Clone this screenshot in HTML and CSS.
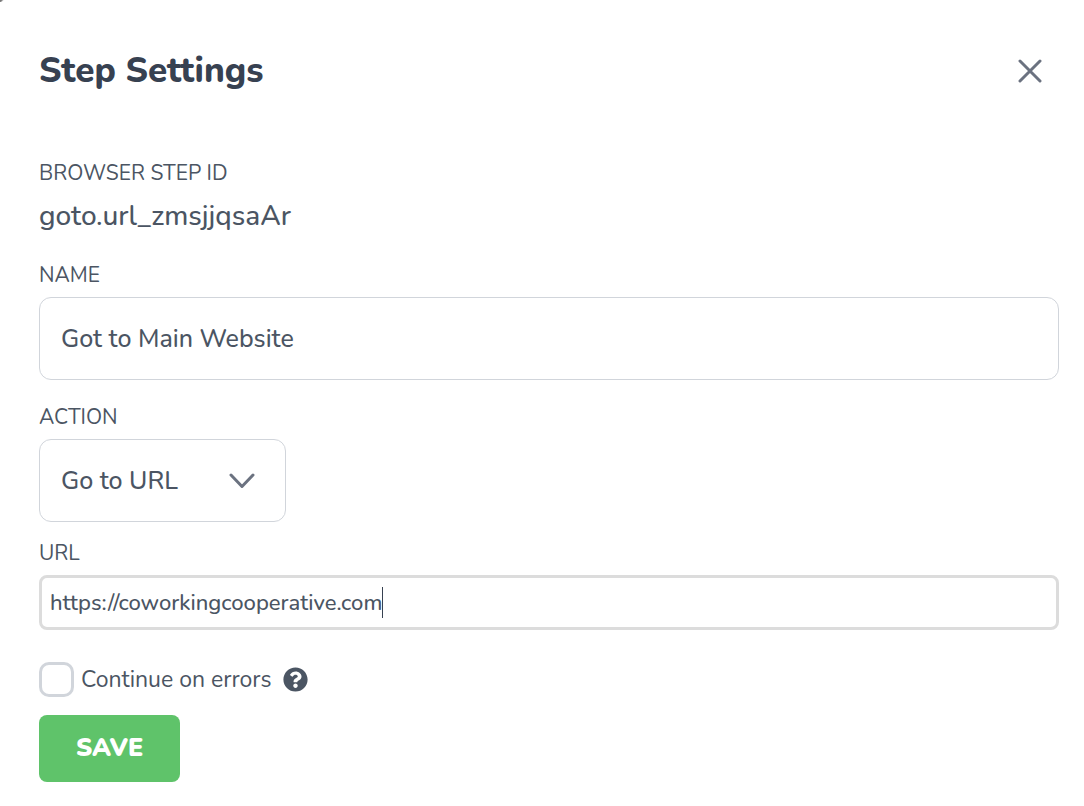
FILE: index.html
```html
<!DOCTYPE html>
<html lang="en">
<head>
    <meta charset="UTF-8">
    <meta name="viewport" content="width=device-width, initial-scale=1.0">
    <title>Step Settings</title>
    <link rel="stylesheet" href="styles.css">
</head>
<body>
    <main class="modal">
        <span class="modal__corner"></span>
        <header class="modal__header">
            <h1 class="modal__title">Step Settings</h1>
            <button class="modal__close" type="button" aria-label="Close">
                <svg width="24" height="24" viewBox="0 0 24 24" fill="none" stroke="#6b7280" stroke-width="3" stroke-linecap="round">
                    <path d="M2 2l20 20M22 2L2 22"/>
                </svg>
            </button>
        </header>

        <form class="form">
            <div class="field field--id">
                <span class="field__label">BROWSER STEP ID</span>
                <span class="field__value">goto.url_zmsjjqsaAr</span>
            </div>

            <div class="field field--name">
                <label class="field__label" for="name">NAME</label>
                <input class="input" id="name" type="text" value="Got to Main Website">
            </div>

            <div class="field field--action">
                <label class="field__label" for="action">ACTION</label>
                <div class="select">
                    <select class="select__control" id="action">
                        <option>Go to URL</option>
                    </select>
                    <svg class="select__arrow" width="26" height="16" viewBox="0 0 26 16" fill="none" stroke="#6b7280" stroke-width="3" stroke-linecap="round" stroke-linejoin="round">
                        <path d="M2 2l11 11.500L24 2"/>
                    </svg>
                </div>
            </div>

            <div class="field field--url">
                <label class="field__label" for="url">URL</label>
                <div class="url">
                    <input class="url__input" id="url" type="text" value="https://coworkingcooperative.com">
                    <span class="url__caret"></span>
                </div>
            </div>

            <div class="check">
                <input class="check__box" id="continue" type="checkbox">
                <label class="check__label" for="continue">Continue on errors</label>
                <svg class="check__help" width="25" height="25" viewBox="0 0 512 512" fill="#4b5563">
                    <path d="M504 256c0 137-111 248-248 248S8 393 8 256C8 119.100 119 8 256 8s248 111.100 248 248zM262.700 90c-54.500 0-89.300 23-116.500 63.800-3.500 5.300-2.400 12.400 2.700 16.300l34.700 26.300c5.200 3.900 12.600 3 16.700-2.100 17.900-22.700 30.100-35.800 57.300-35.800 20.400 0 45.700 13.100 45.700 33 0 15-12.400 22.700-32.500 34C247.100 238.500 216 254.900 216 296v4c0 6.600 5.400 12 12 12h56c6.600 0 12-5.400 12-12v-1.300c0-28.500 83.200-29.600 83.200-106.700 0-58-60.200-102-116.500-102zM256 338c-25.400 0-46 20.600-46 46s20.600 46 46 46 46-20.600 46-46-20.600-46-46-46z"/>
                </svg>
            </div>

            <button class="save" type="submit">SAVE</button>
        </form>
    </main>
</body>
</html>
```

FILE: styles.css
```css
* {
    box-sizing: border-box;
    margin: 0;
    padding: 0;
}

body {
    background-color: #fff;
    color: #4b5563;
    font-family: 'Nunito', 'Lato', sans-serif;
    font-weight: 500;
}

input,
select,
button {
    color: inherit;
    font-family: inherit;
    font-weight: inherit;
}

.modal {
    position: relative;
    padding: 48px 25px 24px 39px;
}

/* dark backdrop showing behind the rounded corner */
.modal__corner {
    position: absolute;
    top: 0;
    left: 0;
    width: 4px;
    height: 2px;
    background: linear-gradient(135deg, #777 30%, #fff 70%);
}

.modal__header {
    display: flex;
    justify-content: space-between;
    align-items: center;
    margin-bottom: 65px;
    padding-right: 17px;
}

.modal__title {
    color: #374151;
    font-size: 35px;
    font-weight: 800;
    line-height: 46px;
}

.modal__close {
    display: flex;
    border: none;
    background: none;
    cursor: pointer;
}

.form {
    display: flex;
    flex-direction: column;
}

.field {
    display: flex;
    flex-direction: column;
    align-items: flex-start;
    gap: 8px;
}

.field__label {
    font-size: 21px;
    font-weight: 400;
    line-height: 28px;
}

.field__value {
    font-size: 28px;
    line-height: 42px;
}

.field--id {
    margin-bottom: 24px;
}

.field--name {
    margin-bottom: 23px;
}

.field--action {
    margin-bottom: 17px;
}

.input,
.select__control {
    width: 100%;
    height: 83px;
    padding: 0 21px;
    border: 1px solid #d1d5db;
    border-radius: 12px;
    background-color: #fff;
    font-size: 25px;
}

.select {
    display: grid;
    align-items: center;
    width: 247px;
}

.select__control {
    grid-area: 1 / 1;
    appearance: none;
}

.select__arrow {
    grid-area: 1 / 1;
    justify-self: end;
    margin-right: 31px;
    pointer-events: none;
}

.url {
    display: flex;
    align-items: center;
    width: 100%;
    height: 55px;
    padding: 0 8px;
    border: 3px solid #dcdcdc;
    border-radius: 8px;
}

.url__input {
    field-sizing: content;
    min-width: 0;
    border: none;
    outline: none;
    font-size: 22px;
    line-height: 32px;
}

.url__caret {
    width: 1px;
    height: 31px;
    background-color: #374151;
}

.check {
    display: flex;
    align-items: center;
    margin: 32px 0 18px;
}

.check__box {
    width: 35px;
    height: 35px;
    margin-right: 7px;
    border: 3px solid #d1d5db;
    border-radius: 10px;
    appearance: none;
}

.check__label {
    font-size: 23px;
    font-weight: 400;
    line-height: 32px;
}

.check__help {
    margin-left: 11px;
}

.save {
    align-self: flex-start;
    padding: 0 37px;
    border: none;
    border-radius: 8px;
    background-color: #5fc36a;
    color: #fff;
    font-size: 25px;
    font-weight: 900;
    line-height: 67px;
    cursor: pointer;
}
```
